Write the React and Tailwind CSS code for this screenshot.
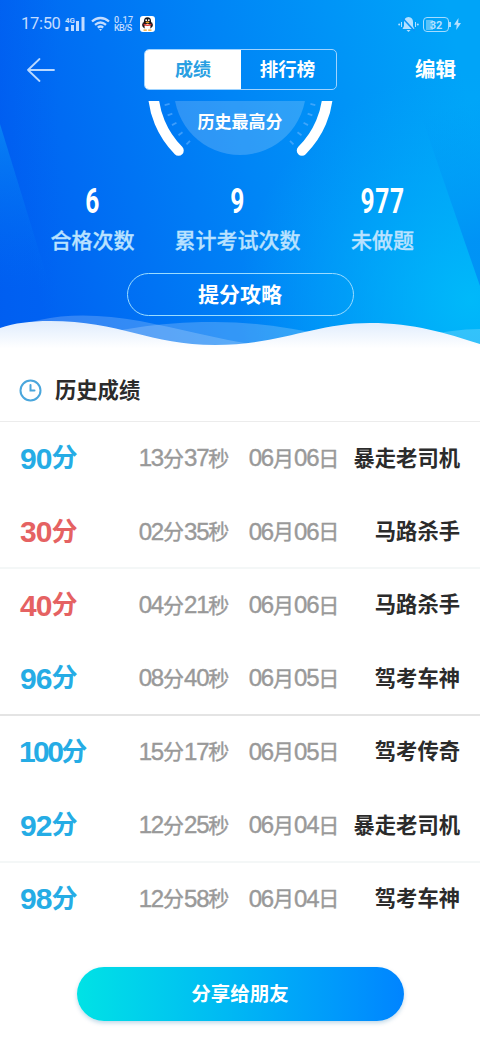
import { useState } from "react";

const records = [
    { score: 90, min: "13", sec: "37", month: "06", day: "06", title: "暴走老司机" },
    { score: 30, min: "02", sec: "35", month: "06", day: "06", title: "马路杀手" },
    { score: 40, min: "04", sec: "21", month: "06", day: "06", title: "马路杀手" },
    { score: 96, min: "08", sec: "40", month: "06", day: "05", title: "驾考车神" },
    { score: 100, min: "15", sec: "17", month: "06", day: "05", title: "驾考传奇" },
    { score: 92, min: "12", sec: "25", month: "06", day: "04", title: "暴走老司机" },
    { score: 98, min: "12", sec: "58", month: "06", day: "04", title: "驾考车神" },
];

const dividers = [
    "border-transparent",
    "border-[#f4f7f7]",
    "border-transparent",
    "border-[#e4e4e4]",
    "border-transparent",
    "border-[#f4f7f7]",
    "border-transparent",
];

const stats = [
    { value: "6", label: "合格次数" },
    { value: "9", label: "累计考试次数" },
    { value: "977", label: "未做题" },
];

function HeaderBackground() {
    return (
        <svg className="absolute inset-0" width="480" height="360" viewBox="0 0 480 360">
            <defs>
                <linearGradient id="sky" gradientUnits="userSpaceOnUse" x1="20" y1="210" x2="470" y2="110">
                    <stop offset="0" stopColor="#0062f2" />
                    <stop offset="0.5" stopColor="#0085f6" />
                    <stop offset="1" stopColor="#00a4f8" />
                </linearGradient>
                <linearGradient id="leftRay" gradientUnits="userSpaceOnUse" x1="0" y1="130" x2="10" y2="290">
                    <stop offset="0" stopColor="#0a8cf5" stopOpacity="0.7" />
                    <stop offset="1" stopColor="#0070f4" stopOpacity="0" />
                </linearGradient>
                <linearGradient id="leftShade" gradientUnits="userSpaceOnUse" x1="0" y1="0" x2="60" y2="0">
                    <stop offset="0" stopColor="#0050ec" stopOpacity="0.2" />
                    <stop offset="1" stopColor="#0058f0" stopOpacity="0" />
                </linearGradient>
                <radialGradient id="glow" gradientUnits="userSpaceOnUse" cx="470" cy="300" r="230">
                    <stop offset="0" stopColor="#00bcfa" stopOpacity="0.9" />
                    <stop offset="1" stopColor="#00acf9" stopOpacity="0" />
                </radialGradient>
                <linearGradient id="rightShade" gradientUnits="userSpaceOnUse" x1="440" y1="110" x2="480" y2="240">
                    <stop offset="0" stopColor="#0094f6" stopOpacity="0" />
                    <stop offset="1" stopColor="#0090f5" stopOpacity="0.9" />
                </linearGradient>
                <linearGradient id="foam" x1="0" y1="0" x2="0" y2="1">
                    <stop offset="0" stopColor="#dfecfd" />
                    <stop offset="0.7" stopColor="#ffffff" />
                </linearGradient>
            </defs>
            <rect width="480" height="360" fill="url(#sky)" />
            <rect width="480" height="360" fill="url(#glow)" />
            <rect width="60" height="360" fill="url(#leftShade)" />
            <path d="M0 124L54 300H0Z" fill="url(#leftRay)" />
            <path d="M422 118L480 286V100Z" fill="url(#rightShade)" />
            <path d="M0 335C40 312 90 312 140 321C180 329 220 339 260 346L100 350Z" fill="#fff" fillOpacity="0.2" />
            <path d="M100 334C150 324 180 322 215 322C255 322 290 328 325 335L250 350H150Z" fill="#fff" fillOpacity="0.2" />
            <path d="M420 336C445 332 460 329 480 329V350H430Z" fill="#fff" fillOpacity="0.2" />
            <path d="M0 328C15 323 30 321 50 321C120 321 150 345 215 345C280 345 315 323 370 323C415 323 445 333 480 344V360H0Z" fill="url(#foam)" />
        </svg>
    );
}

function StatusBar() {
    return (
        <div className="flex h-[48px] items-center justify-between pl-[21px] pr-[19px] text-[#c3dcff]">
            <div className="flex items-center">
                <span className="w-[39px] font-[Roboto] text-[16.5px] leading-none tracking-[-0.3px]">17:50</span>
                <svg className="ml-[5px]" width="21" height="16" viewBox="0 0 21 16" fill="currentColor">
                    <text x="0" y="6.5" fontSize="8" fontWeight="700" fontFamily="Roboto">4G</text>
                    <rect x="0.5" y="11" width="3" height="4" />
                    <rect x="6" y="9" width="3" height="6" />
                    <rect x="11" y="5" width="3" height="10" />
                    <rect x="16.5" y="1" width="3" height="14" />
                </svg>
                <svg className="ml-[5px]" width="19" height="16" viewBox="0 0 19 16" fill="none" stroke="currentColor" strokeWidth="2.3">
                    <path d="M1 5.5C6 0.8 13 0.8 18 5.5" />
                    <path d="M4 8.8C7.4 6 11.6 6 15 8.8" />
                    <path d="M6.8 11.6C8.6 10.2 10.4 10.2 12.2 11.6" />
                    <path d="M8 13H11L9.5 15Z" fill="currentColor" stroke="none" />
                </svg>
                <div className="ml-[4px] w-[20px] font-[Roboto] text-[9px] font-medium leading-[8px]">
                    <div className="tracking-[0.4px]">0.17</div>
                    <div className="tracking-[-0.7px]">KB/S</div>
                </div>
                <svg className="ml-[6px]" width="15" height="16" viewBox="0 0 15 16">
                    <rect width="15" height="16" rx="3" fill="#fff" />
                    <ellipse cx="7.5" cy="9" rx="5.4" ry="4" fill="#15151c" />
                    <ellipse cx="7.5" cy="5.6" rx="3.6" ry="4.4" fill="#15151c" />
                    <ellipse cx="7.5" cy="10.8" rx="3" ry="3" fill="#fff" />
                    <circle cx="6.2" cy="4.2" r="0.9" fill="#fff" />
                    <circle cx="8.8" cy="4.2" r="0.9" fill="#fff" />
                    <ellipse cx="7.5" cy="6.4" rx="2" ry="0.8" fill="#f0a020" />
                    <path d="M3.6 7.6C6 9 9 9 11.4 7.6V9.2C9 10.3 6 10.3 3.6 9.2Z" fill="#e0352e" />
                    <path d="M3.5 14.2H6.8M8.2 14.2H11.5" stroke="#f0a020" strokeWidth="1.2" />
                </svg>
            </div>
            <div className="flex items-center text-[#b5e0ff]">
                <svg width="21" height="17" viewBox="0 0 21 17" fill="currentColor">
                    <path d="M10.5 1C7.5 1 6 3.2 6 6V10L4.5 13H16.5L15 10V6C15 3.2 13.5 1 10.5 1Z" />
                    <path d="M8.5 14H12.5L10.5 16Z" />
                    <path d="M4.5 2L16.5 15" stroke="#0b93f7" strokeWidth="1.6" />
                    <circle cx="1.2" cy="8.5" r="1" />
                    <circle cx="19.8" cy="8.5" r="1" />
                    <path d="M3.5 6V11M17.5 6V11" stroke="currentColor" />
                </svg>
                <div className="ml-[4px] flex h-[15px] w-[26px] items-center justify-center rounded-[4px] border-[1.5px] border-[#a5dcff] font-[Roboto] text-[11px] font-bold leading-none">
                    <span className="relative top-px flex h-[10px] w-[20px] items-center justify-center bg-linear-to-r from-white/35 from-35% to-transparent to-35%">32</span>
                </div>
                <div className="h-[5px] w-[2px] bg-[#a5dcff]" />
                <svg className="ml-[3px]" width="7" height="12" viewBox="0 0 7 12" fill="currentColor">
                    <path d="M4.5 0L0 6.8H2.7L2.2 12L7 5H4.2Z" />
                </svg>
            </div>
        </div>
    );
}

function Gauge() {
    // Tick marks between the arc and the disc
    const ticks = [12, 20, 28, 37, 46, 134, 143, 152, 160, 168];
    return (
        <div className="relative mx-auto h-[57px] w-[190px]">
            <svg className="absolute inset-0" width="190" height="57" viewBox="0 0 190 57" fill="none">
                <circle cx="95" cy="-12" r="66" fill="#fff" fillOpacity="0.18" />
                {ticks.map((deg) => (
                    <path key={deg} d="M167 -12H172" stroke="#6fb8ff" strokeOpacity="0.55" strokeWidth="1.8" transform={`rotate(${deg} 95 -12)`} />
                ))}
                <path d="M8 -12A87.5 87.5 0 0 0 33.500 49.500" stroke="#fff" strokeWidth="10.500" strokeLinecap="round" />
                <path d="M183 -12A87.5 87.5 0 0 1 157 49.500" stroke="#fff" strokeWidth="10.500" strokeLinecap="round" />
            </svg>
            <p className="relative pt-[10px] text-center text-[17px] font-bold leading-[24px] text-white">历史最高分</p>
        </div>
    );
}

function RecordRow({ record, divider }) {
    const { score, min, sec, month, day, title } = record;
    return (
        <div className={`flex h-[73.43px] items-center border-b-2 pl-[20px] pr-[20px] pt-px ${divider}`}>
            <div className={`flex w-[114px] items-center font-bold ${score >= 90 ? "text-[#25ace5]" : "text-[#e56262]"}`}>
                <span className={`text-[30px] ${score === 100 ? "-ml-px tracking-[-2.6px]" : "tracking-[-0.9px]"}`}>{score}</span>
                <span className="text-[26px] leading-none">分</span>
            </div>
            <div className="flex w-[100px] items-center justify-center text-[#999] [-webkit-text-stroke:0.4px_#999]">
                <span className="text-[24px] tracking-[-1.2px]">{min}</span>
                <span className="text-[21px] leading-none">分</span>
                <span className="text-[24px] tracking-[-1.2px]">{sec}</span>
                <span className="text-[21px] leading-none">秒</span>
            </div>
            <div className="ml-[10px] flex w-[100px] items-center justify-center text-[#999] [-webkit-text-stroke:0.4px_#999]">
                <span className="text-[24px] tracking-[-1.2px]">{month}</span>
                <span className="text-[21px] leading-none">月</span>
                <span className="text-[24px] tracking-[-1.2px]">{day}</span>
                <span className="text-[21px] leading-none">日</span>
            </div>
            <span className="flex-1 whitespace-nowrap pt-[2px] text-right text-[21.3px] font-bold leading-none text-[#2b2b2b]">{title}</span>
        </div>
    );
}

function App() {
    const [tab, setTab] = useState("score");

    return (
        <div className="h-[1041px] w-[480px] overflow-hidden bg-white font-['Liberation_Sans','Noto_Sans_CJK_SC',sans-serif]">

            {/*Header*/}
            <header className="relative h-[360px]">
                <HeaderBackground />
                <div className="relative">
                    <StatusBar />

                    <div className="flex h-[43px] items-center pl-[27px] pr-[24px]">
                        <button type="button" className="w-[117px]">
                            <svg width="28" height="24" viewBox="0 0 28 24" fill="none" stroke="#b9d8ff" strokeWidth="1.8" strokeLinecap="round" strokeLinejoin="round">
                                <path d="M12.5 1L1 12L12.5 23M1 12H27" />
                            </svg>
                        </button>
                        <div className="flex h-[41px] w-[193px] overflow-hidden rounded-[5px] border border-[#9fd3ff]">
                            <button
                                type="button"
                                onClick={() => setTab("score")}
                                className={`w-[96px] pt-[2px] text-[18px] font-bold ${tab === "score" ? "bg-white text-[#2a9fe2]" : "text-white"}`}
                            >
                                成绩
                            </button>
                            <button
                                type="button"
                                onClick={() => setTab("rank")}
                                className={`flex-1 pr-[2px] pt-px text-[18.5px] font-bold ${tab === "rank" ? "bg-white text-[#2a9fe2]" : "text-white"}`}
                            >
                                排行榜
                            </button>
                        </div>
                        <button type="button" className="ml-auto pt-[2px] text-[20.5px] font-bold text-white">编辑</button>
                    </div>

                    <div className="pt-[10px]">
                        <Gauge />
                    </div>

                    <div className="flex pl-[20px] pt-[26px]">
                        {stats.map((item) => (
                            <div key={item.label} className="flex w-[145px] flex-col items-center">
                                <span className="inline-block h-[36px] scale-x-[0.7] font-[Roboto] text-[35px] font-bold leading-[36px] tracking-[1px] text-white">{item.value}</span>
                                <span className="mt-[6px] whitespace-nowrap text-[21px] font-medium leading-[30px] text-[#b9e2ff] [-webkit-text-stroke:0.3px_#b9e2ff]">{item.label}</span>
                            </div>
                        ))}
                    </div>

                    <button
                        type="button"
                        className="mx-auto mt-[17px] block h-[43px] w-[227px] rounded-full border-[1.5px] border-[#9bdcff] text-[21px] font-bold leading-none text-white"
                    >
                        提分攻略
                    </button>
                </div>
            </header>

            {/*History list*/}
            <div className="flex h-[62px] items-center border-b border-[#ececec] pl-[19px]">
                <svg width="23" height="23" viewBox="0 0 23 23" fill="none" stroke="#4aa6dc" strokeWidth="2" strokeLinecap="round">
                    <circle cx="11.5" cy="11.5" r="10" />
                    <path d="M11.5 6V11.5H15.5" />
                </svg>
                <h2 className="ml-[13px] pt-[2px] text-[21.3px] font-bold leading-none text-[#2b2b2b]">历史成绩</h2>
            </div>
            {records.map((record, i) => (
                <RecordRow key={i} record={record} divider={dividers[i]} />
            ))}

            {/*Share*/}
            <button
                type="button"
                className="mx-auto mt-[31px] block h-[54px] w-[327px] rounded-full bg-linear-to-r from-[#00e2e5] to-[#0084ff] pt-[2px] text-[19.5px] font-bold text-white shadow-[0_2px_4px_rgba(0,100,160,0.25)]"
            >
                分享给朋友
            </button>
        </div>
    );
}

export default App;
